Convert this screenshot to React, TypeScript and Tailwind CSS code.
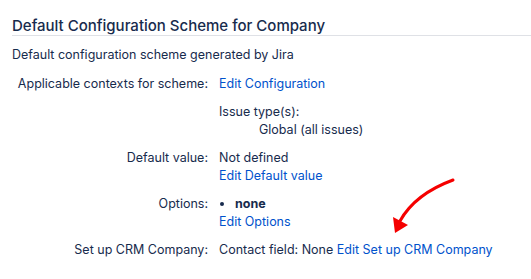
export default function App() {
  return (
    <div className="relative h-[279px] w-[531px] overflow-hidden bg-white pl-3 pt-4 font-['Inter',sans-serif] text-[12.5px] leading-[18px] text-[#172b4d]">
      <h2 className="border-b border-[#dfe1e6] text-[15px] font-medium leading-[19px]">
        Default Configuration Scheme for Company
      </h2>
      <p className="mt-[10px]">Default configuration scheme generated by Jira</p>

      <div className="mt-[11px] grid grid-cols-[196px_1fr] gap-x-[11px] gap-y-[10px]">
        <div className="whitespace-nowrap text-right">Applicable contexts for scheme:</div>
        <div>
          <a className="text-[#0052cc]">Edit Configuration</a>
          <div className="mt-[10px]">Issue type(s):</div>
          <div className="pl-10">Global (all issues)</div>
        </div>

        <div className="whitespace-nowrap text-right">Default value:</div>
        <div>
          <div>Not defined</div>
          <a className="block text-[#0052cc]">Edit Default value</a>
        </div>

        <div className="whitespace-nowrap text-right">Options:</div>
        <div>
          <ul>
            <li className="flex items-center gap-[11px] pl-px">
              <span className="h-1 w-1 rounded-full bg-[#172b4d]" />
              <b className="font-bold">none</b>
            </li>
          </ul>
          <a className="block text-[#0052cc]">Edit Options</a>
        </div>

        <div className="whitespace-nowrap text-right">Set up CRM Company:</div>
        <div className="whitespace-nowrap">
          Contact field: None <a className="text-[#0052cc]">Edit Set up CRM Company</a>
        </div>
      </div>

      <svg className="absolute left-0 top-0" width="531" height="279" viewBox="0 0 531 279">
        <path d="M453 180 Q415 194 400 221" fill="none" stroke="#f50000" strokeWidth="3" strokeLinecap="round" />
        <polygon points="393,217 408,225 395,233" fill="#f50000" />
      </svg>
    </div>
  );
}
